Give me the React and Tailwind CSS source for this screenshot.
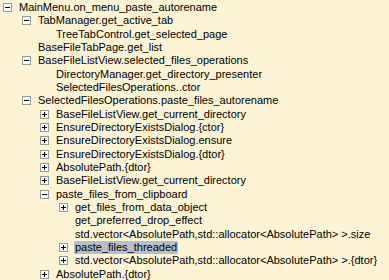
const ROWS = [
  { level: 0, label: 'MainMenu.on_menu_paste_autorename', icon: 'minus' },
  { level: 1, label: 'TabManager.get_active_tab', icon: 'minus' },
  { level: 2, label: 'TreeTabControl.get_selected_page' },
  { level: 1, label: 'BaseFileTabPage.get_list' },
  { level: 1, label: 'BaseFileListView.selected_files_operations', icon: 'minus' },
  { level: 2, label: 'DirectoryManager.get_directory_presenter' },
  { level: 2, label: 'SelectedFilesOperations..ctor' },
  { level: 1, label: 'SelectedFilesOperations.paste_files_autorename', icon: 'minus' },
  { level: 2, label: 'BaseFileListView.get_current_directory', icon: 'plus' },
  { level: 2, label: 'EnsureDirectoryExistsDialog.{ctor}', icon: 'plus' },
  { level: 2, label: 'EnsureDirectoryExistsDialog.ensure', icon: 'plus' },
  { level: 2, label: 'EnsureDirectoryExistsDialog.{dtor}', icon: 'plus' },
  { level: 2, label: 'AbsolutePath.{dtor}', icon: 'plus' },
  { level: 2, label: 'BaseFileListView.get_current_directory', icon: 'plus' },
  { level: 2, label: 'paste_files_from_clipboard', icon: 'minus' },
  { level: 3, label: 'get_files_from_data_object', icon: 'plus' },
  { level: 3, label: 'get_preferred_drop_effect' },
  { level: 3, label: 'std.vector<AbsolutePath,std::allocator<AbsolutePath> >.size' },
  { level: 3, label: 'paste_files_threaded', icon: 'plus', selected: true },
  { level: 3, label: 'std.vector<AbsolutePath,std::allocator<AbsolutePath> >.{dtor}', icon: 'plus' },
  { level: 2, label: 'AbsolutePath.{dtor}', icon: 'plus' },
]

const INDENT = ['pl-[3px]', 'pl-[22px]', 'pl-[40px]', 'pl-[59px]']

function Expander({ type }) {
  if (!type) return <span className="w-[9px] h-[9px] shrink-0" />
  return (
    <svg width="9" height="9" viewBox="0 0 9 9" className="shrink-0">
      <rect x="0.5" y="0.5" width="8" height="8" fill="#ffffff" stroke="#919b9c" />
      <line x1="2" y1="4.5" x2="7" y2="4.5" stroke="#000000" />
      {type === 'plus' && <line x1="4.5" y1="2" x2="4.5" y2="7" stroke="#000000" />}
    </svg>
  )
}

export default function App() {
  return (
    <div
      className="w-[389px] h-[280px] overflow-hidden bg-[#fff3d6] pt-[1px] text-[11px] text-black"
      style={{ fontFamily: '"Liberation Sans", Arial, sans-serif' }}
    >
      {ROWS.map((row, i) => (
        <div key={i} className={`flex items-center h-[13.33px] whitespace-nowrap ${INDENT[row.level]}`}>
          <Expander type={row.icon} />
          <span
            className={`ml-[6px] px-[1px] leading-[13px] ${row.selected ? 'bg-[#b8bdcb]' : ''}`}
          >
            {row.label}
          </span>
        </div>
      ))}
    </div>
  )
}
